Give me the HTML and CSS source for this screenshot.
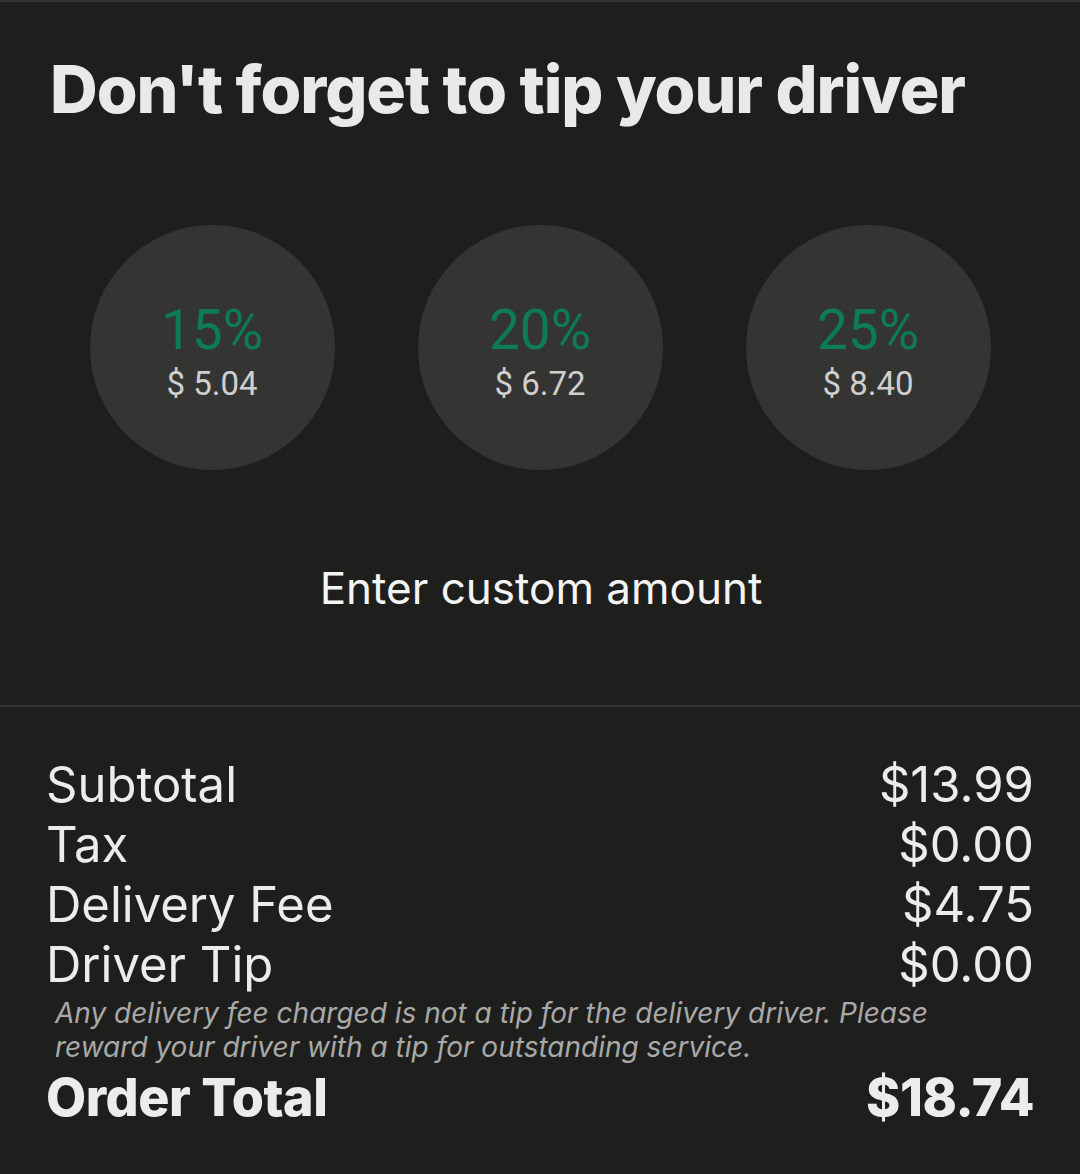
FILE: index.html
```html
<!DOCTYPE html>
<html lang="en">
<head>
  <meta charset="UTF-8" />
  <meta name="viewport" content="width=device-width, initial-scale=1.0"/>
  <title>Driver Tip</title>
  <link rel="stylesheet" href="styles.css">
</head>
<body>
  <div class="tip-section">
    <h1>Don't forget to tip your driver</h1>

    <div class="tip-options">
      <button class="tip-circle">
        <span class="pct">15%</span>
        <span class="amt">$ 5.04</span>
      </button>
      <button class="tip-circle">
        <span class="pct">20%</span>
        <span class="amt">$ 6.72</span>
      </button>
      <button class="tip-circle">
        <span class="pct">25%</span>
        <span class="amt">$ 8.40</span>
      </button>
    </div>

    <div class="custom">Enter custom amount</div>
  </div>

  <div class="summary">
    <div class="row"><span>Subtotal</span><span>$13.99</span></div>
    <div class="row"><span>Tax</span><span>$0.00</span></div>
    <div class="row"><span>Delivery Fee</span><span>$4.75</span></div>
    <div class="row"><span>Driver Tip</span><span>$0.00</span></div>
    <p class="note">Any delivery fee charged is not a tip for the delivery driver. Please reward your driver with a tip for outstanding service.</p>
    <div class="row total"><span>Order Total</span><span>$18.74</span></div>
  </div>
</body>
</html>
```

FILE: styles.css
```css
html, body {
  margin: 0;
  padding: 0;
  background: #1e1f1d;
}
body {
  font-family: Inter, "Noto Sans", sans-serif;
  color: #ececec;
  border-top: 2px solid #333432;
  min-height: 1172px;
}
.tip-section {
  padding: 52px 0 0;
  border-bottom: 2px solid #343533;
  height: 651px;
}
h1 {
  margin: 0 0 0 50px;
  font-size: 66px;
  font-weight: 800;
  letter-spacing: -1px;
  color: #e9e9e9;
  line-height: 70px;
}
.tip-options {
  display: flex;
  justify-content: center;
  gap: 83px;
  margin-top: 101px;
}
.tip-circle {
  width: 245px;
  height: 245px;
  border-radius: 50%;
  border: none;
  background: #343533;
  display: flex;
  flex-direction: column;
  align-items: center;
  justify-content: center;
  font-family: Roboto, sans-serif;
  padding: 16px 0 0;
}
.pct {
  color: #0e7b58;
  font-size: 55px;
  line-height: 56px;
}
.amt {
  color: #cfcfcf;
  font-size: 33px;
  line-height: 52px;
}
.custom {
  text-align: center;
  font-size: 44px;
  color: #f4f4f4;
  margin-top: 91px;
  padding-left: 2px;
}
.summary {
  padding: 48px 46px 0 46px;
}
.row {
  display: flex;
  justify-content: space-between;
  font-size: 49px;
  line-height: 60px;
  color: #ececec;
}
.note {
  margin: 1px 0 0 9px;
  font-style: italic;
  font-size: 28px;
  line-height: 34px;
  color: #a9a9a9;
  padding-right: 80px;
}
.row.total {
  font-weight: 800;
  font-size: 52px;
  letter-spacing: -0.5px;
  margin-top: 4px;
}
```
